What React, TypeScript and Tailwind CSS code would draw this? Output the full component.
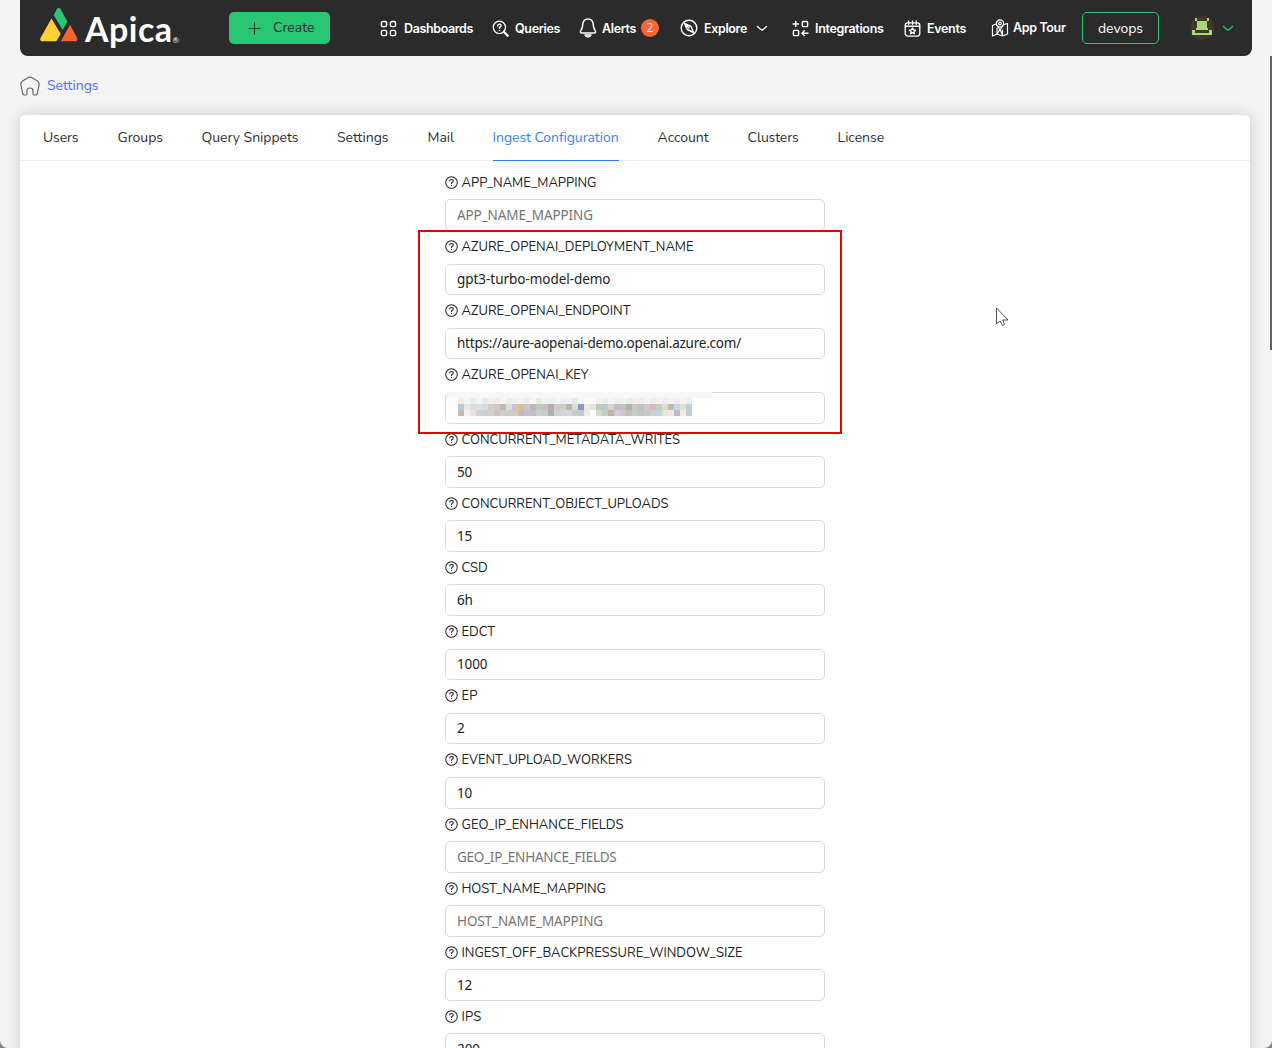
import { useLayoutEffect, useRef, type ReactNode } from "react";

const nunito = "font-[Nunito,Lato,sans-serif]";
const inter = "font-[Inter,sans-serif]";

/** One line of text whose tracking is tuned so that it spans `w` pixels. */
function Fit({ w, children, className = "" }: { w: number; children: string; className?: string }) {
  const ref = useRef<HTMLSpanElement>(null);
  useLayoutEffect(() => {
    const el = ref.current;
    if (!el) return;
    const apply = () => {
      el.style.letterSpacing = "0px";
      const natural = el.getBoundingClientRect().width;
      const gap = (w - natural) / children.length;
      el.style.letterSpacing = `${gap}px`;
    };
    apply();
    document.fonts?.ready.then(apply);
  }, [w, children]);
  return (
    <span ref={ref} className={`inline-block whitespace-nowrap ${className}`}>
      {children}
    </span>
  );
}

function Svg({ s, children, className = "", sw = 1.5 }: { s: number; children: ReactNode; className?: string; sw?: number }) {
  return (
    <svg width={s} height={s} viewBox="0 0 18 18" fill="none" stroke="currentColor" strokeWidth={sw} strokeLinecap="round" strokeLinejoin="round" className={`shrink-0 ${className}`}>
      {children}
    </svg>
  );
}

function Logo() {
  return (
    <div className="ml-5 mt-[7px] flex w-[141px] items-start">
      <svg width="38" height="36" viewBox="0 0 38 36" className="shrink-0">
        <path d="M11.500 11.500L20.700 27L16.800 33.500Q16.300 34.300 15.300 34.300H2Q-.6 34 .5 31z" fill="#ffd133" />
        <path d="M17 1.800Q18.800.200 20.600 2L27.300 14.500L22.700 23L13.800 8.200z" fill="#29c673" />
        <path d="M30 17.800L37.200 31Q38 34 35.500 34.300H20.800z" fill="#f26430" />
      </svg>
      <div className="ml-[7px] mt-[4px] flex items-end text-white">
        <Fit w={87.500} className="h-9 font-[Lato,sans-serif] text-[34px] font-bold leading-9">Apica</Fit>
        <span className="mb-[1px] font-[Lato,sans-serif] text-[8px]">®</span>
      </div>
    </div>
  );
}

function NavItem({ icon, label, w, className }: { icon: ReactNode; label: string; w: number; className: string }) {
  return (
    <div className={`flex h-14 shrink-0 items-center text-white ${className}`}>
      {icon}
      <Fit w={w} className={`mt-[2px] ${inter} text-[12.500px] font-semibold leading-4`}>{label}</Fit>
    </div>
  );
}

function Chevron() {
  return (
    <svg width="12" height="7" viewBox="0 0 12 7" fill="none" stroke="currentColor" strokeWidth="1.400" strokeLinecap="round" className="shrink-0">
      <path d="M1.500 1.500Q5 5 6 5Q7 5 10.500 1.500" />
    </svg>
  );
}

function Header() {
  return (
    <header className="ml-5 flex h-14 w-[1232px] shrink-0 items-start rounded-b-[8px] bg-[#2b2b2b]">
      <Logo />
      <button className={`ml-12 mt-3 flex h-8 w-[101px] items-center rounded-[5px] bg-[#29c673] pl-5 text-[#2b2b2b] ${nunito}`}>
        <Svg s={13} sw={1.300} className="mr-[11px] -ml-px"><path d="M9 1v16M1 9h16" /></Svg>
        <Fit w={41.500} className="ml-px text-[14px] leading-5">Create</Fit>
      </button>
      <NavItem className="ml-[50px] w-[93px]" w={69} label="Dashboards" icon={
        <Svg s={17} className="mr-[7px]"><rect x="1.500" y="1.500" width="5.500" height="5.500" rx="1.700" /><rect x="11" y="1.500" width="5.500" height="5.500" rx="1.700" /><rect x="1.500" y="11" width="5.500" height="5.500" rx="1.700" /><rect x="11" y="11" width="5.500" height="5.500" rx="1.700" /></Svg>
      } />
      <NavItem className="ml-[19px] w-[68px]" w={45} label="Queries" icon={
        <Svg s={17} className="mr-[6px]" sw={1.300}><circle cx="7.800" cy="7.800" r="6.500" /><path d="M12.500 12.500L16.500 16.500" strokeWidth="2.400" /><path d="M6 6.300Q6.200 4.300 8 4.400Q9.800 4.600 9.500 6.300Q9.200 7.300 7.900 7.900V8.800M7.900 11V11.200" strokeWidth="1.500" /></Svg>
      } />
      <NavItem className="ml-[19px] w-[58px]" w={34} label="Alerts" icon={
        <svg width="18" height="20" viewBox="0 0 18 20" fill="none" stroke="currentColor" strokeWidth="1.500" strokeLinejoin="round" className="mr-[5px] shrink-0">
          <path d="M9 1C5.700 1 3.800 3.400 3.800 6.200C3.800 9.500 3 10.800 1.700 12.800C1 14 1.600 15 2.800 15H15.200C16.400 15 17 14 16.300 12.800C15 10.800 14.200 9.500 14.200 6.200C14.200 3.400 12.300 1 9 1z" />
          <path d="M6 17Q7 18.900 9 18.900Q11 18.900 12 17z" />
        </svg>
      } />
      <span className="ml-1 mt-[19px] flex h-[18px] w-[18px] items-center justify-center rounded-full bg-[#ff6433] pb-px font-[Open_Sans,sans-serif] text-[12px] leading-none text-white">2</span>
      <NavItem className="ml-[21px] w-[67px]" w={43} label="Explore" icon={
        <Svg s={18} className="mr-[6px]" sw={1.400}><circle cx="9" cy="9" r="7.800" /><path d="M4.500 4.500L11 7.500L13.500 13.500L7.300 10.500zM4.500 4.500L9 9" /></Svg>
      } />
      <span className="ml-[9px] mt-[25px] text-white"><Chevron /></span>
      <NavItem className="ml-[24px] w-[92px]" w={68.500} label="Integrations" icon={
        <Svg s={17} className="mr-[6px]"><path d="M4 1.500V7M1.200 4.200H6.800M10.500 14H17M13 11.500L10.500 14L13 16.500" /><rect x="11" y="1.500" width="5.500" height="5.500" rx="1" /><rect x="1.500" y="11" width="5.500" height="5.500" rx="1" /></Svg>
      } />
      <NavItem className="ml-[20px] w-[62px]" w={39} label="Events" icon={
        <Svg s={17} className="mr-[6px]" sw={1.400}><rect x="1.300" y="3" width="15.400" height="14" rx="2.600" /><path d="M1.500 6.600H16.500M5 1V4.500M9 1V4.500M13 1V4.500" /><path d="M9 8.500L10 10.500L12.200 10.800L10.600 12.300L11 14.500L9 13.400L7 14.500L7.400 12.300L5.800 10.800L8 10.500z" /></Svg>
      } />
      <NavItem className="-mt-px ml-[25px] w-[75px]" w={52.500} label="App Tour" icon={
        <Svg s={18} className="mr-[4px] mt-[2px]" sw={1.200}><path d="M5 5L1.500 6.500V17L6 15L11.500 17L16.500 15V4.500L13 5.500M6 9V15M11.500 11V17M6 15L9 10.500L11.500 16" /><circle cx="9" cy="4.500" r="3.600" /><circle cx="9" cy="4.500" r="1.300" /><path d="M6 6.500L9 11L12 6.500" /></Svg>
      } />
      <button className={`ml-4 mt-3 flex h-8 w-[77px] items-center justify-center rounded-[5px] border border-[#29c673] text-white ${nunito}`}>
        <Fit w={45} className="mt-[2px] text-[14px] leading-5">devops</Fit>
      </button>
      <svg width="24" height="24" viewBox="0 0 24 24" className="ml-[31px] mt-4 shrink-0" shapeRendering="crispEdges">
        <circle cx="12" cy="12" r="12" fill="#46352a" shapeRendering="auto" />
        <path d="M5 2h2v3h10V2h2v3h-2v7h1v2h4v5H2v-5h4v-2h1V5H5zM5 14v3h14v-3h-4v-2h-6v2z" fill="#a3db7c" fillRule="evenodd" />
        <path d="M7 5h10v7H7zM9 11h6v3H9z" fill="#a3db7c" />
      </svg>
      <span className="ml-2 mt-[25px] text-[#29c673]"><Chevron /></span>
    </header>
  );
}

const tabs = [
  { t: "Users", w: 35.500, g: "mr-[39px]" },
  { t: "Groups", w: 45.500, g: "mr-[38.500px]" },
  { t: "Query Snippets", w: 97, g: "mr-[38.500px]" },
  { t: "Settings", w: 51.500, g: "mr-[39px]" },
  { t: "Mail", w: 26.500, g: "mr-[38.500px]" },
  { t: "Ingest Configuration", w: 126, g: "mr-[39px]" },
  { t: "Account", w: 51, g: "mr-[39px]" },
  { t: "Clusters", w: 51, g: "mr-[39px]" },
  { t: "License", w: 46.500, g: "" },
];

type Field = { name: string; w: number; value?: string; vw: number; hidden?: boolean };
const fields: Field[] = [
  { name: "APP_NAME_MAPPING", w: 135, vw: 136 },
  { name: "AZURE_OPENAI_DEPLOYMENT_NAME", w: 232, value: "gpt3-turbo-model-demo", vw: 153.500 },
  { name: "AZURE_OPENAI_ENDPOINT", w: 169, value: "https://aure-aopenai-demo.openai.azure.com/", vw: 284 },
  { name: "AZURE_OPENAI_KEY", w: 127, vw: 0, hidden: true },
  { name: "CONCURRENT_METADATA_WRITES", w: 218.500, value: "50", vw: 15 },
  { name: "CONCURRENT_OBJECT_UPLOADS", w: 207, value: "15", vw: 15 },
  { name: "CSD", w: 26, value: "6h", vw: 15.500 },
  { name: "EDCT", w: 33.500, value: "1000", vw: 30.500 },
  { name: "EP", w: 16, value: "2", vw: 7.500 },
  { name: "EVENT_UPLOAD_WORKERS", w: 170.500, value: "10", vw: 15 },
  { name: "GEO_IP_ENHANCE_FIELDS", w: 162, vw: 159.500 },
  { name: "HOST_NAME_MAPPING", w: 144.500, vw: 146 },
  { name: "INGEST_OFF_BACKPRESSURE_WINDOW_SIZE", w: 281, value: "12", vw: 15 },
  { name: "IPS", w: 20, value: "200", vw: 23 },
];

const mosaic = [
  "#efefed #f6f6f6 #e9eef0 #f4f4f4 #eaeaea #f3efee #eeeeee #f5f5f5 #ececec #f1efe9 #f3f3f3 #eeeeee #f6f6f6 #e9e9e9 #f2f2f2 #eeeeee #f5f5f5 #eeeeee #f0f0f0 #eaeaea #f4f4f4 #fafafa #fafafa #f3f3f3 #e9eeee #f4f4f4 #eeeeee #f2f2f2 #eaeaea #f3efef #eeeeee #f4f4f4 #ededed #f2f2f2 #eeeeee #f3f3f3 #eaf0f2 #f4f4f4 #eeeeee",
  "#b9c8d4 #e9e9e7 #dcdcdc #dbe0e0 #d8dcdc #cfd0cc #d0c8c4 #c0b6b2 #dcdcdc #c8c4c8 #dfc08c #c8c8cc #c0b8b4 #c4c8c0 #c0c4c4 #b8b0a8 #d4c8cc #c8d0c8 #c0b4a8 #d8dcd8 #8c98c0 #ecece4 #e2e4e6 #c4c8b4 #b8c8d4 #d8d4c8 #c8bcc4 #c0c4c0 #b8b0a8 #c8c8c4 #b8c4c4 #d8c4c8 #c8c0bc #c8ccd0 #dedcd0 #c4b8ac #c8d8e0 #e0e0dc #c0d0d4",
  "#c4bab6 #f2f2ee #ece0dc #d0d0cc #c8d2d6 #d0d4d0 #c8c4bc #d0ccc8 #c8cccc #d4c8c0 #c4b8bc #c0c4d0 #cdb9cc #d0ccd4 #c8ccc8 #b0b0aa #d0d4d0 #ccd6da #d0d8d8 #c8ccc4 #c0c8d0 #ecece4 #ffffff #d8dccc #c8ccc4 #bcb4ac #d0ccd4 #ccc4d0 #c0c0b8 #c4ccd0 #c8c4bc #c8c8cc #ccd0c8 #c4d4dc #ede4d0 #e4eaf4 #c0b8c4 #f2ecde #b9ced8",
].map((r) => r.split(" "));

function Mosaic() {
  return (
    <svg width="267" height="24" viewBox="0 0 267 24" shapeRendering="crispEdges" className="absolute left-px top-0">
      <path d="M0 0H266V6H0z" fill="#f7f7f7" />
      <path d="M0 6H12V24H0z" fill="#fdfdfd" />
      {mosaic.map((row, y) => row.map((c, x) => <rect key={`${x}-${y}`} x={12 + x * 6} y={6 + y * 6} width="6" height="6" fill={c} />))}
    </svg>
  );
}

function FieldRow({ f }: { f: Field }) {
  return (
    <div className="h-[64.170px] shrink-0">
      <div className="flex h-[22px] items-center text-[#222]">
        <Svg s={13} sw={1.400} className="mr-[3.500px]"><circle cx="9" cy="9" r="8" /><path d="M6.500 7Q6.600 4.800 9 4.800Q11.500 4.900 11.400 7Q11.200 8.400 9 9.300V10.500M9 12.900V13.100" /></Svg>
        <Fit w={f.w} className={`${nunito} mt-px text-[13px] leading-[22px]`}>{f.name}</Fit>
      </div>
      <div className="relative mt-[6px] flex h-[31.700px] items-center rounded-[5px] border border-[#d9d9d9] bg-white pl-[11px] font-[Noto_Sans,sans-serif] text-[13.500px]">
        {f.hidden ? (
          <div className="absolute -left-px -top-px"><Mosaic /></div>
        ) : (
          <Fit w={f.vw} className={f.value ? "text-[#222]" : "text-[#757575]"}>{f.value ?? f.name}</Fit>
        )}
      </div>
    </div>
  );
}

export default function App() {
  return (
    <div className="relative h-[1048px] w-[1272px] overflow-hidden bg-[#858585]">
      <div className="flex h-full flex-col overflow-hidden rounded-b-[8px] bg-[#f4f4f4]">
        <Header />
        <div className={`ml-5 flex h-[59px] shrink-0 items-center text-[#4c6fff] ${nunito}`}>
          <svg width="20" height="20" viewBox="0 0 20 20" fill="none" stroke="#666" strokeWidth="1.200" strokeLinejoin="round" className="mr-[7px]">
            <path d="M8.500 1.400Q10 .700 11.500 1.400L17.500 5Q19.500 6.500 19.100 9L17.300 17.500Q16.800 19 15.500 19H14Q13 19 13 17.500V14.500Q13 12 10 12Q7 12 7 14.500V17.500Q7 19 6 19H4.500Q3.200 19 2.700 17.500L.900 9Q.500 6.500 2.500 5z" />
          </svg>
          <Fit w={51.500} className="text-[14px]">Settings</Fit>
        </div>
        <main className="ml-5 flex h-[1000px] w-[1230px] shrink-0 flex-col rounded-t-[5px] bg-white shadow-[0_0_15px_rgba(0,0,0,0.17)]">
          <nav className={`flex h-[46px] shrink-0 border-b border-[#f0f0f0] pl-[23px] text-[14px] text-[#303030] ${nunito}`}>
            {tabs.map((t) => (
              <div key={t.t} className={`h-[46px] shrink-0 ${t.g} ${t.t === "Ingest Configuration" ? "border-b border-[#2d7ff0] text-[#3b82f6]" : ""}`}>
                <Fit w={t.w} className="leading-[45px]">{t.t}</Fit>
              </div>
            ))}
          </nav>
          <div className="ml-[425px] mt-[10.450px] flex w-[380px] flex-col">
            {fields.map((f) => <FieldRow key={f.name} f={f} />)}
          </div>
        </main>
      </div>
      <div className="absolute left-[418px] top-[230px] h-[204px] w-[424px] border-2 border-[#e60000]" />
      <svg width="13" height="19" viewBox="0 0 13 19" className="absolute left-[996px] top-[308px]">
        <path d="M.500 0V16L4 13L6.500 17.500L8.500 16.500L6.800 12H12z" fill="#fff" stroke="#223" strokeWidth=".800" />
      </svg>
      <div className="absolute right-0 top-14 h-[294px] w-[2px] bg-[#606060]" />
    </div>
  );
}
